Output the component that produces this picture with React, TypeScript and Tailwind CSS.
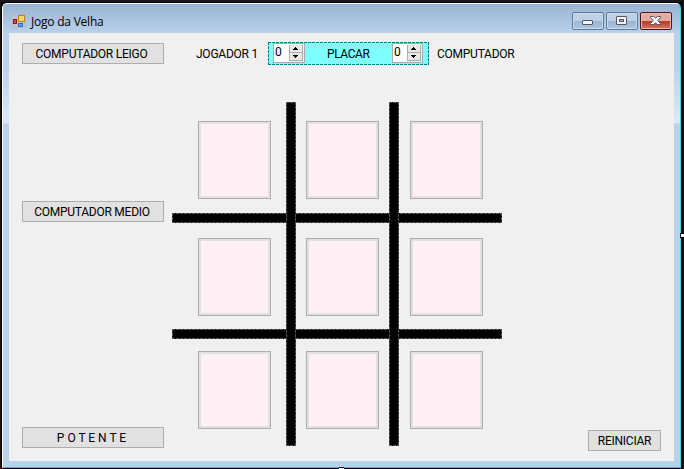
import type { ReactNode } from "react";

const GRAY_DASHES =
  "bg-[repeating-linear-gradient(90deg,#555_0_3px,#000_3px_4px),repeating-linear-gradient(90deg,#555_0_3px,#000_3px_4px),repeating-linear-gradient(180deg,#555_0_3px,#000_3px_4px),repeating-linear-gradient(180deg,#555_0_3px,#000_3px_4px)] bg-[length:100%_1px,100%_1px,1px_100%,1px_100%] bg-[position:0_0,0_100%,0_0,100%_0] bg-no-repeat bg-black";
const TEAL_DASHES =
  "bg-[repeating-linear-gradient(90deg,#007f7f_0_3px,#80ffff_3px_4px),repeating-linear-gradient(90deg,#007f7f_0_3px,#80ffff_3px_4px),repeating-linear-gradient(180deg,#007f7f_0_3px,#80ffff_3px_4px),repeating-linear-gradient(180deg,#007f7f_0_3px,#80ffff_3px_4px)] bg-[length:100%_1px,100%_1px,1px_100%,1px_100%] bg-[position:0_0,0_100%,0_0,100%_0] bg-no-repeat bg-[#80ffff]";

function FormButton({ children, className = "" }: { children: ReactNode; className?: string }) {
  return (
    <button
      className={`flex h-[21px] shrink-0 items-center justify-center whitespace-nowrap border border-[#adadad] bg-[#e1e1e1] leading-none ${className}`}
    >
      {children}
    </button>
  );
}

function Counter({ className }: { className: string }) {
  return (
    <div className={`flex h-5 shrink-0 border border-[#ababab] bg-white ${className}`}>
      <span className="flex-1 pl-px pt-px leading-[15px]">0</span>
      <svg width="15" height="18" viewBox="0 0 15 18" shapeRendering="crispEdges">
        <rect width="15" height="18" fill="#f0f0f0" />
        <path d="M.5 1v15.5h13V1M.5 8.5h13" fill="none" stroke="#adadad" />
        <path d="M1 1h12v7H1zM1 9h12v7H1z" fill="#e7e7e7" />
        <path d="M6 3h1v1h1v1h1v1H4V5h1V4h1zM4 11h5v1H8v1H7v1H6v-1H5v-1H4z" fill="#000" />
      </svg>
    </div>
  );
}

function WindowButton({ kind }: { kind: "min" | "max" | "close" }) {
  const close = kind === "close";
  return (
    <button
      className={`flex h-[18px] w-8 items-start rounded-[2px] border pl-[9px] pt-[3px] ${
        close
          ? "border-[#491525] bg-[linear-gradient(#e5aaa2_0_8px,#b93a22_8px,#cf7563)] shadow-[inset_0_0_0_1px_#e8b7aa]"
          : "border-[#60799b] bg-[linear-gradient(#bdd0e6_0_8px,#9ab4d0_8px,#adc6e1)] shadow-[inset_0_0_0_1px_#cadbed]"
      }`}
    >
      <svg width="11" height="9" viewBox="0 0 11 9" fill="#f5f5f5" stroke="#505766">
        {kind === "min" && <rect x=".5" y="4.5" width="10" height="4" rx=".5" />}
        {kind === "max" && (
          <>
            <rect x=".5" y=".5" width="10" height="8" rx=".5" />
            <rect x="3.5" y="3.5" width="4" height="2" fill="#9ab4d0" />
          </>
        )}
        {close && (
          <path d="M.5.5h3.2l1.8 1.6L7.3.5h3.2v1L7.8 4.5l2.7 3v1H7.3L5.5 6.9 3.7 8.5H.5v-1l2.7-3L.5 1.5z" />
        )}
      </svg>
    </button>
  );
}

const CELLS = [
  "col-start-1 row-start-1 ml-[26px] mt-[19px]",
  "col-start-3 row-start-1 ml-[10px] mt-[19px]",
  "col-start-5 row-start-1 ml-[11px] mt-[19px]",
  "col-start-1 row-start-3 ml-[26px] mt-[15px]",
  "col-start-3 row-start-3 ml-[10px] mt-[15px]",
  "col-start-5 row-start-3 ml-[11px] mt-[15px]",
  "col-start-1 row-start-5 ml-[26px] mt-[12px]",
  "col-start-3 row-start-5 ml-[10px] mt-[12px]",
  "col-start-5 row-start-5 ml-[11px] mt-[12px]",
];

function Board() {
  return (
    <div className="ml-[8px] mt-[37px] grid h-[344px] w-[330px] grid-cols-[114px_10px_93px_10px_103px] grid-rows-[111px_10px_106px_10px_107px]">
      <div className={`col-span-full col-start-1 row-start-2 ${GRAY_DASHES}`} />
      <div className={`col-span-full col-start-1 row-start-4 ${GRAY_DASHES}`} />
      <div className={`col-start-2 row-span-full row-start-1 ${GRAY_DASHES}`} />
      <div className={`col-start-4 row-span-full row-start-1 ${GRAY_DASHES}`} />
      {CELLS.map((place) => (
        <button
          key={place}
          className={`h-[78px] w-[73px] border border-[#adadad] bg-[#fff0f5] shadow-[inset_0_0_0_2px_#e1e1e1] ${place}`}
        />
      ))}
    </div>
  );
}

export default function App() {
  return (
    <div className="relative h-[469px] w-[684px] overflow-hidden bg-[#161616] bg-[radial-gradient(#666_0.6px,transparent_0.7px)] bg-[length:2px_2px] pl-px pt-[2px] font-[Roboto,sans-serif] text-[12px] text-black">
      <div className="flex h-[467px] w-[682px] bg-black pl-px pt-px">
        <div className="flex h-[465px] w-[679px] flex-col rounded-t-[5px] border border-b-[#36bfd4] border-l-white border-r-[#36d6ee] border-t-white bg-[linear-gradient(#99b4d1,#b9d1ea_29px,#b9d1ea_60px,#dce8f5_119px,#b9d1ea_120px)] px-[6px] pb-[6px]">
          <header className="flex h-[29px] shrink-0 items-start justify-between pl-[3px] pr-[2px]">
            <div className="flex items-start pt-[10px]">
              <svg width="14" height="14" viewBox="0 0 14 14" shapeRendering="crispEdges">
                <path d="M.5.5h13v13H.5z" fill="#b9c6d3" stroke="#aebccb" />
                <path d="M6.5 1.5h6v6h-6z" fill="#ffd84f" stroke="#b78408" />
                <path d="M1.5 5.5h3v4h-3z" fill="#d94b41" stroke="#8d1717" />
                <path d="M6.5 9.5h4v3h-4z" fill="#669bf5" stroke="#3966c9" />
              </svg>
              <h1 className="ml-[5px] mt-px whitespace-nowrap font-['Open_Sans',sans-serif] text-[12px] leading-[14px] tracking-[-0.22px]">Jogo da Velha</h1>
            </div>
            <div className="flex gap-[2px] pt-[8px]">
              <WindowButton kind="min" />
              <WindowButton kind="max" />
              <WindowButton kind="close" />
            </div>
          </header>
          <main className="flex h-[428px] w-[665px] bg-[#f0f0f0]">
            <aside className="flex w-[155px] flex-col pl-[13px] pt-[10px]">
              <FormButton className="w-[142px] pr-[3px] tracking-[-0.25px]">COMPUTADOR LEIGO</FormButton>
              <FormButton className="mt-[137px] w-[142px] pr-[2px] tracking-[-0.25px]">COMPUTADOR MEDIO</FormButton>
              <FormButton className="mt-[205px] w-[142px] pr-[3px]">P O T E N T E</FormButton>
            </aside>
            <section className="w-[400px] pt-[9px]">
              <div className="flex h-[23px] items-center whitespace-nowrap">
                <span className="w-[104px] pl-[32px] tracking-[-0.25px]">JOGADOR 1</span>
                <div className={`flex h-[23px] w-[161px] shrink-0 items-start pl-[5px] pt-px ${TEAL_DASHES}`}>
                  <Counter className="w-8" />
                  <span className="w-[87px] pl-[22px] leading-[22px] tracking-[-0.4px]">PLACAR</span>
                  <Counter className="w-[31px]" />
                </div>
                <span className="ml-[8px] tracking-[-0.25px]">COMPUTADOR</span>
              </div>
              <Board />
            </section>
            <div className="flex flex-1 flex-col items-end justify-end pb-[10px] pr-[13px]">
              <FormButton className="w-[73px] tracking-[-0.25px]">REINICIAR</FormButton>
            </div>
          </main>
        </div>
      </div>
      <span className="absolute left-[680px] top-[233px] h-[5px] w-[4px] border border-r-0 border-black bg-white" />
      <span className="absolute left-[339px] top-[467px] h-[2px] w-[5px] border-t border-black bg-white" />
    </div>
  );
}
